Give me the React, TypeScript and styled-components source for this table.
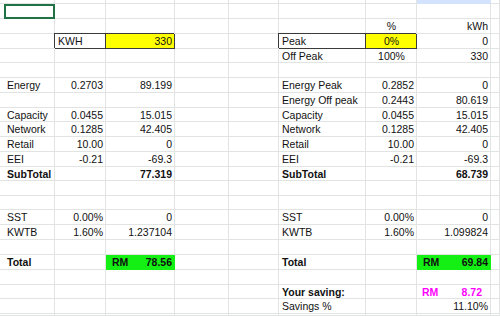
import React from "react";
import styled, { createGlobalStyle } from "styled-components";

const GlobalStyle = createGlobalStyle`
  html, body {
    margin: 0;
    padding: 0;
    background: #ffffff;
    overflow: hidden;
  }
  body {
    font-family: "Liberation Sans", Arial, sans-serif;
  }
`;

// pixel sizes of the visible sheet columns / rows (incl. 1px gridline)
const COLS = [4, 51, 51, 69, 54, 50, 87, 51, 74, 9];
const ROWS = [4, 15, 15, 15, 14, 15, 15, 15, 14, 15, 15, 15, 14, 15, 14, 15, 15, 15, 15, 15, 14, 15, 2];

const GRID = "#e2e3e3";
const DARK = "#3a3a3a";
const YELLOW = "#ffff00";
const GREEN = "#14f014";
const MAGENTA = "#ff00ff";
const SELECT = "#217346";

const Sheet = styled.div`
  display: grid;
  grid-template-columns: ${COLS.map((c) => `${c}px`).join(" ")};
  grid-template-rows: ${ROWS.map((r) => `${r}px`).join(" ")};
  width: 500px;
  height: 316px;
  overflow: hidden;
  background: #ffffff;
`;

type CellProps = {
  $align?: "l" | "r" | "c";
  $bold?: boolean;
  $bg?: string;
  $color?: string;
  $boxed?: boolean;
  $selected?: boolean;
};

const Cell = styled.div<CellProps>`
  box-sizing: border-box;
  display: flex;
  align-items: center;
  justify-content: ${(p) =>
    p.$align === "r" ? "flex-end" : p.$align === "c" ? "center" : "flex-start"};
  padding: 1px 2px 0 3px;
  border-right: 1px solid
    ${(p) => (p.$selected ? SELECT : p.$boxed ? DARK : p.$bg ?? GRID)};
  border-bottom: 1px solid
    ${(p) => (p.$selected ? SELECT : p.$boxed ? DARK : p.$bg ?? GRID)};
  background: ${(p) => p.$bg ?? "#ffffff"};
  color: ${(p) => p.$color ?? "#111111"};
  font-size: 10.5px;
  font-weight: ${(p) => (p.$bold ? 700 : 400)};
  line-height: 1;
  white-space: nowrap;
  min-width: 0;
  ${(p) => p.$boxed && `box-shadow: -1px -1px 0 0 ${DARK};`}
  ${(p) =>
    p.$selected &&
    `box-shadow: inset 2px 2px 0 0 ${SELECT}, inset -1px -1px 0 0 ${SELECT};`}
`;

const Money = styled.span<{ $padLeft: number; $padRight: number }>`
  display: flex;
  justify-content: space-between;
  width: 100%;
  padding: 0 ${(p) => p.$padRight}px 0 ${(p) => p.$padLeft}px;
  box-sizing: border-box;
`;

type Spec = {
  t?: string;
  a?: "l" | "r" | "c";
  b?: boolean;
  bg?: string;
  box?: boolean;
  color?: string;
  sel?: boolean;
  rm?: string;
  padL?: number;
  padR?: number;
};

const L = (t: string, o: Partial<Spec> = {}): Spec => ({ t, a: "l", ...o });
const R = (t: string, o: Partial<Spec> = {}): Spec => ({ t, a: "r", ...o });
const C = (t: string, o: Partial<Spec> = {}): Spec => ({ t, a: "c", ...o });

const row = (cells: Record<string, Spec>): Spec[] =>
  "ABCDEFGHI".split("").map((k) => cells[k] ?? {});

const both = (label: string, rate: string, left: string, right: string, rateR = rate) =>
  row({ A: L(label), B: R(rate), C: R(left), F: L(label), G: R(rateR), H: R(right) });

const bold = { b: true };

const SHEET: Spec[][] = [
  row({ H: { bg: "#d3e3fd" } }),
  row({ A: { sel: true } }),
  row({ G: C("%"), H: R("kWh") }),
  row({
    B: L("KWH", { box: true }),
    C: R("330", { box: true, bg: YELLOW }),
    F: L("Peak", { box: true }),
    G: C("0%", { box: true, bg: YELLOW }),
    H: R("0"),
  }),
  row({ F: L("Off Peak"), G: C("100%"), H: R("330") }),
  row({}),
  row({
    A: L("Energy"),
    B: R("0.2703"),
    C: R("89.199"),
    F: L("Energy Peak"),
    G: R("0.2852"),
    H: R("0"),
  }),
  row({ F: L("Energy Off peak"), G: R("0.2443"), H: R("80.619") }),
  both("Capacity", "0.0455", "15.015", "15.015"),
  both("Network", "0.1285", "42.405", "42.405"),
  both("Retail", "10.00", "0", "0"),
  both("EEI", "-0.21", "-69.3", "-69.3"),
  row({
    A: L("SubTotal", bold),
    C: R("77.319", bold),
    F: L("SubTotal", bold),
    H: R("68.739", bold),
  }),
  row({}),
  row({}),
  both("SST", "0.00%", "0", "0"),
  both("KWTB", "1.60%", "1.237104", "1.099824"),
  row({}),
  row({
    A: L("Total", bold),
    C: { rm: "78.56", bg: GREEN, b: true, padL: 3, padR: 0 },
    F: L("Total", bold),
    H: { rm: "69.84", bg: GREEN, b: true, padL: 3, padR: 0 },
  }),
  row({}),
  row({
    F: L("Your saving:", bold),
    H: { rm: "8.72", color: MAGENTA, b: true, padL: 2, padR: 6 },
  }),
  row({ F: L("Savings %"), H: R("11.10%") }),
  row({}),
];

export default function App() {
  return (
    <>
      <GlobalStyle />
      <Sheet>
        {SHEET.map((cells, r) => (
          <React.Fragment key={r}>
            <Cell />
            {cells.map((s, c) => (
              <Cell
                key={c}
                $align={s.a}
                $bold={s.b}
                $bg={s.bg}
                $color={s.color}
                $boxed={s.box}
                $selected={s.sel}
              >
                {s.rm ? (
                  <Money $padLeft={s.padL ?? 3} $padRight={s.padR ?? 0}>
                    <span>RM</span>
                    <span>{s.rm}</span>
                  </Money>
                ) : (
                  s.t
                )}
              </Cell>
            ))}
          </React.Fragment>
        ))}
      </Sheet>
    </>
  );
}
